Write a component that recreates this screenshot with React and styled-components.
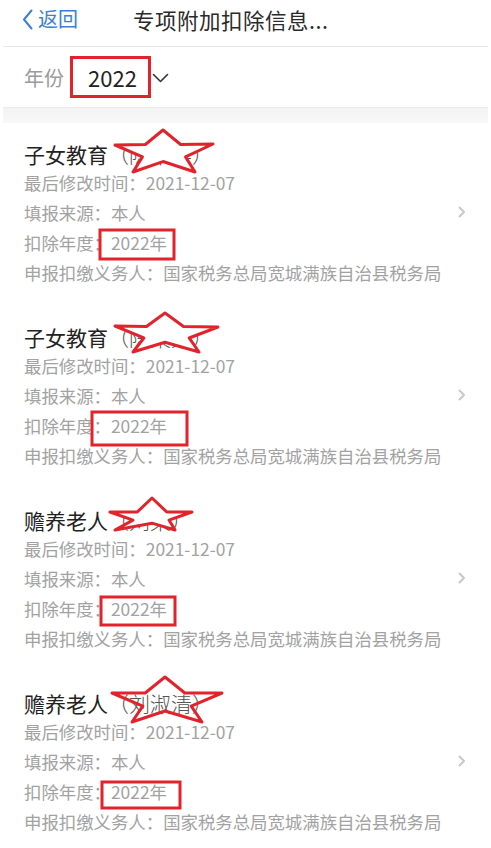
import styled, { createGlobalStyle } from "styled-components";

const GlobalStyle = createGlobalStyle`
  body {
    margin: 0;
    background: #fff;
    font-family: "Noto Sans CJK SC", "Noto Sans", sans-serif;
  }
`;

const records = [
  {
    kind: "子女教育",
    name: "陈某某",
    star: { top: [163, 7], left: [115, 22], right: [213, 21], bl: [133, 49], br: [195, 49] },
    box: { x: 100, y: 107, w: 74, h: 29 },
    cover: true,
  },
  {
    kind: "子女教育",
    name: "陈某某",
    star: { top: [165, 7], left: [115, 20], right: [218, 21], bl: [133, 46], br: [199, 46] },
    box: { x: 92, y: 106, w: 95, h: 33 },
    cover: true,
  },
  {
    kind: "赡养老人",
    name: "刘某",
    star: { top: [152, 9], left: [110, 23], right: [192, 23], bl: [115, 41], br: [175, 41] },
    box: { x: 101, y: 108, w: 74, h: 28 },
    cover: true,
  },
  {
    kind: "赡养老人",
    name: "刘淑清",
    star: { top: [165, 5], left: [112, 21], right: [222, 21], bl: [132, 50], br: [202, 50] },
    box: { x: 102, y: 110, w: 78, h: 26 },
    cover: false,
  },
];

// hand drawn star: outer tips given, inner corners worked out from them
const starPoints = ({ top, left, right, bl, br }) => {
  const armY = (left[1] + right[1]) / 2;
  const span = right[0] - left[0];
  const low = (bl[1] + br[1]) / 2;
  const pts = [
    top,
    [top[0] + span * 0.18, armY],
    right,
    [right[0] - span * 0.28, armY + (low - armY) * 0.45],
    br,
    [top[0], armY + (low - armY) * 0.62],
    bl,
    [left[0] + span * 0.28, armY + (low - armY) * 0.45],
    left,
    [top[0] - span * 0.18, armY],
  ];
  return pts.map((p) => p.join(",")).join(" ");
};

const App = () => {
  return (
    <Page>
      <GlobalStyle />
      <NavBar>
        <BackButton>
          <svg width="11" height="21" viewBox="0 0 11 21">
            <path d="M9.5 1.5 L2 10.5 L9.5 19.5" fill="none" stroke="#3b7fd6" strokeWidth="2" strokeLinecap="round" strokeLinejoin="round" />
          </svg>
          返回
        </BackButton>
        <Title>专项附加扣除信息...</Title>
      </NavBar>

      <YearRow>
        <YearLabel>年份</YearLabel>
        <YearValue>2022</YearValue>
        <svg width="17" height="10" viewBox="0 0 17 10">
          <path d="M1.5 1.5 L8.5 8.5 L15.5 1.5" fill="none" stroke="#333" strokeWidth="1.6" strokeLinecap="round" strokeLinejoin="round" />
        </svg>
      </YearRow>

      <Band />

      {records.map((r, i) => (
        <Card key={i}>
          <Info>
            <CardTitle>
              {r.kind}
              <Paren>（{r.name}）</Paren>
            </CardTitle>
            <Line>最后修改时间：2021-12-07</Line>
            <Line>填报来源：本人</Line>
            <Line>扣除年度：2022年</Line>
            <Line>申报扣缴义务人：国家税务总局宽城满族自治县税务局</Line>
          </Info>
          <Arrow width="8" height="12" viewBox="0 0 8 12">
            <path d="M1.5 1.5 L6 6 L1.5 10.5" fill="none" stroke="#c8c8c8" strokeWidth="2" strokeLinecap="round" strokeLinejoin="round" />
          </Arrow>
          <Markup width="491" height="183" viewBox="0 0 491 183">
            <polygon
              points={starPoints(r.star)}
              fill={r.cover ? "#fff" : "none"}
              stroke="#e2232b"
              strokeWidth="3"
              strokeLinejoin="round"
            />
            <rect x={r.box.x} y={r.box.y} width={r.box.w} height={r.box.h} fill="none" stroke="#e2232b" strokeWidth="3" />
          </Markup>
        </Card>
      ))}
    </Page>
  );
};

const Page = styled.div`
  width: 491px;
  min-height: 848px;
  background: #fff;
  overflow: hidden;
`;

const NavBar = styled.div`
  height: 46px;
  display: flex;
  align-items: center;
  padding-left: 22px;
  border-bottom: 1px solid #e6e6e6;
  margin: 0 3px 0 3px;
  padding-left: 19px;
`;

const BackButton = styled.div`
  display: flex;
  align-items: center;
  gap: 5px;
  color: #3b7fd6;
  font-size: 20px;
  line-height: 1;
  margin-top: -8px;
`;

const Title = styled.div`
  margin-left: 55px;
  margin-top: -8px;
  font-size: 21.5px;
  color: #2a2a2a;
  letter-spacing: 0.5px;
`;

const YearRow = styled.div`
  height: 60px;
  display: flex;
  align-items: center;
  padding-left: 24px;
  border-bottom: 1px solid #ececec;
  margin: 0 3px;
  padding-left: 21px;

  svg {
    margin-top: 2px;
  }
`;

const YearLabel = styled.span`
  font-size: 20px;
  color: #9a9a9a;
`;

const YearValue = styled.span`
  margin-left: 6px;
  margin-right: 1px;
  height: 36px;
  display: inline-flex;
  align-items: center;
  padding: 0 11px 0 15px;
  border: 3px solid #e2232b;
  font-size: 22px;
  color: #222;
`;

const Band = styled.div`
  height: 15px;
  margin: 0 3px;
  background: linear-gradient(#f3f3f3, #f8f8f8);
`;

const Card = styled.div`
  position: relative;
  height: 183px;
  box-sizing: border-box;
  padding: 16px 25px 17px 24px;
  display: flex;
  align-items: center;
`;

const Info = styled.div`
  flex: 1;
  display: flex;
  flex-direction: column;
  align-self: flex-start;
`;

const CardTitle = styled.div`
  font-size: 21px;
  line-height: 30px;
  color: #222;
  margin-bottom: -1px;
`;

const Paren = styled.span`
  color: #555;
  font-weight: 300;
`;

const Line = styled.div`
  font-size: 17.4px;
  line-height: 30px;
  color: #a2a2a2;
  white-space: nowrap;
`;

const Arrow = styled.svg`
  flex: none;
  margin-top: -4px;
`;

const Markup = styled.svg`
  position: absolute;
  left: 0;
  top: 0;
  pointer-events: none;
`;

export default App;
